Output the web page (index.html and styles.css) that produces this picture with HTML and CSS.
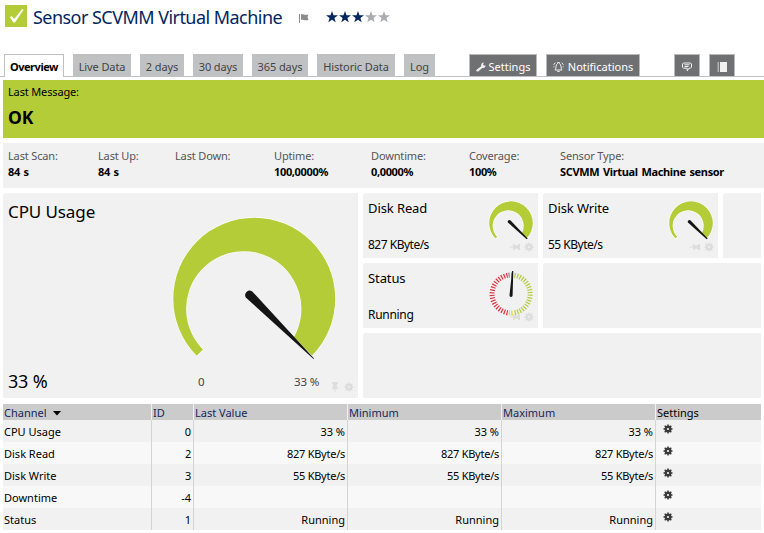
FILE: index.html
```
<!DOCTYPE html>
<html lang="en">
<head>
<meta charset="utf-8">
<title>Sensor SCVMM Virtual Machine</title>
<link rel="stylesheet" href="styles.css">
</head>
<body>
<svg class="defs" aria-hidden="true">
  <symbol id="gear" viewBox="0 0 10 10"><g fill="none" stroke="currentColor"><circle cx="5" cy="5" r="2.300" stroke-width="2.400"/><path stroke-width="1.500" d="M5 .5v2M5 7.500v2M.5 5h2M7.500 5h2M1.700 1.700 3.200 3.200M6.800 6.800 8.300 8.300M1.700 8.300 3.200 6.800M6.800 3.200 8.300 1.700"/></g></symbol>
  <symbol id="pin" viewBox="0 0 10 10"><path d="M0 4.500h3V2h1.500v1.200H8V2h2v6H8V6.800H4.500V8H3V5.500H0z"/></symbol>
  <symbol id="dial" viewBox="0 0 46 46"><path class="arc" d="M7.500 38.500A21.800 21.800 0 1 1 38.500 38.500L33.700 33.400A15.500 15.500 0 1 0 9.200 36.800Z"/><path class="needle" d="M20.200 22.800A1.600 1.600 0 0 1 22.600 20.500L39.700 38.500 38.700 39.300Z"/></symbol>
</svg>
<header class="header">
  <svg class="status" viewBox="0 0 22 22"><path class="lime" d="M0 0h22v22H0z"/><path class="tick" d="M5 12.400 6.600 10.900 9.200 14 17.300 4 18.600 4.800 10 17.600H8.400z"/></svg>
  <h1 class="title">Sensor SCVMM Virtual Machine</h1>
  <svg class="flag" viewBox="0 0 10 9"><path d="M0 0h1v9H0zM2 .3C4-.2 5 1.400 9.500.5L8.500 3l1 3C6 7 4 5.300 2 5.700z"/></svg>
  <svg class="stars" viewBox="0 0 66 12">
    <defs><path id="star" d="M6 0 7.500 4.300H12L8.400 7 9.700 11.300 6 8.700 2.300 11.300 3.600 7 0 4.300H4.500Z"/></defs>
    <g class="navy"><use href="#star"/><use href="#star" x="13"/><use href="#star" x="26"/></g>
    <g class="dim"><use href="#star" x="39"/><use href="#star" x="52"/></g>
  </svg>
</header>
<nav class="tabs">
  <a class="tab active">Overview</a><a class="tab live">Live Data</a><a class="tab d2">2 days</a><a class="tab d30">30 days</a><a class="tab d365">365 days</a><a class="tab historic">Historic Data</a><a class="tab log">Log</a>
  <a class="tab dark settings"><svg class="ico" viewBox="0 0 10 10"><path class="fill" d="M.6 7.700 5.200 4.200C4.800 2 6 .4 8 .5L7 2.300l.7 1.200L9.600 3.400C9.700 5.400 8 6.500 6.300 5.900L2.200 9.500C1 10-.3 8.900.6 7.700z"/></svg><span>Settings</span></a>
  <a class="tab dark notes"><svg class="ico bell" viewBox="0 0 11 10"><path class="line" d="M2 8C3.600 6.500 2.300 2.500 4.500 1.700V.6h2v1.100C8.700 2.500 7.400 6.500 9 8zM4.300 9.400h2.400M2.300.7.6 2.800M8.700.7l1.700 2.100M.4 4.800h1M9.600 4.800h1"/></svg><span>Notifications</span></a>
  <a class="tab dark chat"><svg class="ico" viewBox="0 0 10 10"><path class="line" d="M1.500 1h7l1 1v3.200l-1 1H7L5.200 9V6.200H1.500l-1-1V2zM2.500 2.800h5M2.500 4.500h4"/></svg></a>
  <a class="tab dark book"><svg class="ico" viewBox="0 0 10 10"><path class="fill" d="M3 0h7v10H3zM.5.500h1.500v1H.5zM.5 2.500h1.500v1H.5zM.5 4.500h1.500v1H.5zM.5 6.500h1.500v1H.5zM.5 8.500h1.500v1H.5z"/></svg></a>
</nav>
<section class="message"><span class="small">Last Message:</span><strong class="ok">OK</strong></section>
<dl class="info">
  <div><dt>Last Scan:</dt><dd>84 s</dd></div>
  <div><dt>Last Up:</dt><dd>84 s</dd></div>
  <div><dt>Last Down:</dt></div>
  <div><dt>Uptime:</dt><dd>100,0000%</dd></div>
  <div><dt>Downtime:</dt><dd>0,0000%</dd></div>
  <div><dt>Coverage:</dt><dd>100%</dd></div>
  <div><dt>Sensor Type:</dt><dd>SCVMM Virtual Machine sensor</dd></div>
</dl>
<main class="gauges">
  <section class="card cpu">
    <div class="labels"><h2>CPU Usage</h2><b class="value">33 %</b></div>
    <div class="plot">
      <svg class="big" viewBox="168 213 172 150"><path class="arc" d="M196.700 355.700A81 81 0 1 1 312 355.500L294 337A57.600 57.600 0 1 0 203 349.500Z"/><path class="needle" d="M245.800 297.500A4.600 4.600 0 0 1 252 291.200L314 358.500 313.500 359Z"/></svg>
      <div class="range"><span>0</span><span>33 %</span></div>
    </div>
    <div class="tools"><svg class="up"><use href="#pin"/></svg><svg><use href="#gear"/></svg></div>
  </section>
  <section class="card"><div class="labels"><h3>Disk Read</h3><span>827 KByte/s</span></div><svg class="dial"><use href="#dial"/></svg><div class="tools"><svg><use href="#pin"/></svg><svg><use href="#gear"/></svg></div></section>
  <section class="card"><div class="labels"><h3>Disk Write</h3><span>55 KByte/s</span></div><svg class="dial"><use href="#dial"/></svg><div class="tools"><svg><use href="#pin"/></svg><svg><use href="#gear"/></svg></div></section>
  <section class="card"></section>
  <section class="card"><div class="labels"><h3>Status</h3><span class="run">Running</span></div>
    <svg class="dial low" viewBox="0 0 46 46"><g class="ticks"><path class="red" d="M19.700 41.700A19 19 0 0 1 19.700 4.300"/><path class="grey" d="M20.500 4.200A19 19 0 0 1 25 4.100"/><path class="green" d="M26.500 4.300A19 19 0 0 1 26.500 41.700"/><path class="yellow" d="M24.500 41.900A19 19 0 0 1 21 41.900"/></g><path class="needle" d="M24.100 0h1.200L24.600 24.500A1.500 1.500 0 0 1 21.500 24.300Z"/></svg>
    <div class="tools"><svg><use href="#pin"/></svg><svg><use href="#gear"/></svg></div></section>
  <section class="card wide"></section>
  <section class="card full"></section>
</main>
<table class="channels">
  <colgroup><col class="c1"><col class="c2"><col class="c3"><col class="c3"><col class="c3"><col></colgroup>
  <thead><tr><th>Channel <svg class="sort" viewBox="0 0 8 5"><path d="M0 0h8L4 4.500z"/></svg></th><th>ID</th><th>Last Value</th><th>Minimum</th><th>Maximum</th><th class="plain">Settings</th></tr></thead>
  <tbody>
    <tr><td>CPU Usage</td><td>0</td><td>33 %</td><td>33 %</td><td>33 %</td><td><svg class="gear"><use href="#gear"/></svg></td></tr>
    <tr class="num"><td>Disk Read</td><td>2</td><td>827 KByte/s</td><td>827 KByte/s</td><td>827 KByte/s</td><td><svg class="gear"><use href="#gear"/></svg></td></tr>
    <tr class="num"><td>Disk Write</td><td>3</td><td>55 KByte/s</td><td>55 KByte/s</td><td>55 KByte/s</td><td><svg class="gear"><use href="#gear"/></svg></td></tr>
    <tr><td>Downtime</td><td>-4</td><td></td><td></td><td></td><td><svg class="gear"><use href="#gear"/></svg></td></tr>
    <tr><td>Status</td><td>1</td><td>Running</td><td>Running</td><td>Running</td><td><svg class="gear"><use href="#gear"/></svg></td></tr>
  </tbody>
</table>
</body>
</html>
```
FILE: styles.css
```
* { box-sizing: border-box; }
body { margin: 0; height: 533px; overflow: hidden; background: #fff; color: #000; font: 11px/16px "Noto Sans", "Open Sans", sans-serif; }
h1, h2, h3, dl, dd { margin: 0; font-weight: 400; }
svg { display: block; flex: none; }
.defs { position: absolute; width: 0; height: 0; }
.lime { fill: #b4cc38; }
.tick { fill: #fff; }
.navy { fill: #03265f; }
.dim { fill: #a9abae; }

.header { height: 54px; display: flex; align-items: flex-start; padding: 5px 0 0 5px; }
.status { width: 22px; height: 22px; }
.title { width: 272px; padding-left: 6px; font-size: 18px; line-height: 24px; color: #03265f; white-space: nowrap; letter-spacing: -.54px; }
.flag { width: 10px; height: 9px; margin-top: 9px; fill: #8c8c8c; }
.stars { width: 66px; height: 12px; margin: 6px 0 0 17px; }

.tabs { display: flex; height: 23px; padding-left: 4px; border-bottom: 1px solid #c0c1c3; white-space: nowrap; }
.tab { height: 22px; margin-right: 9px; display: flex; align-items: center; justify-content: center; padding-top: 4px; background: #c0c1c3; color: #444; letter-spacing: -.1px; }
.active { width: 60px; height: 23px; background: #fff; border: 1px solid #c0c1c3; border-bottom: 0; padding-top: 2px; color: #000; font-weight: 700; letter-spacing: -.45px; }
.live { width: 58px; }
.d2 { width: 44px; }
.d30 { width: 50px; }
.d365 { width: 56px; }
.historic { width: 78px; }
.log { width: 31px; margin-right: 34px; }
.dark { background: #6f7072; border: 1px solid #b9babc; border-bottom: 0; padding-top: 3px; color: #fff; gap: 3px; letter-spacing: 0; }
.settings { width: 68px; }
.notes { width: 94px; margin-right: 34px; gap: 4px; }
.chat, .book { width: 26px; }
.ico { width: 10px; height: 10px; }
.bell { width: 11px; }
.fill { fill: #f1f1f1; }
.line { fill: none; stroke: #f1f1f1; stroke-width: 1; }

.message { height: 58px; margin: 3px 0 0 3px; padding: 4px 5px; background: #b4cc38; display: flex; flex-direction: column; }
.small { letter-spacing: -.15px; }
.ok { font-size: 17.500px; line-height: 24px; margin-top: 5px; }

.info { display: grid; grid-template-columns: 90px 77px 99px 97px 98px 91px 1fr; height: 45px; margin: 5px 0 0 3px; padding: 5px 0 0 5px; background: #f1f1f1; white-space: nowrap; }
.info dt { color: #555; letter-spacing: -.15px; }
.info dd { font-weight: 700; letter-spacing: -.35px; word-spacing: 1.200px; }

.gauges { display: grid; grid-template-columns: 355px 175px 175px 38px; grid-template-rows: repeat(3, 65px); gap: 5px; margin: 5px 3px 0; }
.card { position: relative; display: flex; justify-content: space-between; padding: 5px 4px 5px 5px; background: #f1f1f1; border-top-left-radius: 3px; white-space: nowrap; }
.cpu { grid-row: span 3; padding: 0 18px 0 5px; }
.wide { grid-column: span 2; }
.full { grid-column: span 3; }
.labels { display: flex; flex-direction: column; justify-content: space-between; font-size: 12px; letter-spacing: -.5px; }
.labels h3 { font-size: 13px; line-height: 20px; letter-spacing: -.1px; }
.labels h2 { font-size: 17px; line-height: 24px; padding-top: 7px; letter-spacing: -.1px; }
.labels .run { letter-spacing: -.3px; }
.labels .value { font-size: 18px; line-height: 24px; padding-bottom: 5px; font-weight: 400; letter-spacing: -.2px; }
.arc { fill: #b4cc38; stroke: #fff; stroke-width: 1.200; paint-order: stroke; }
.needle { fill: #151515; }
.plot { width: 172px; padding-top: 20px; }
.big { width: 172px; height: 150px; }
.range { display: flex; justify-content: space-between; margin: 11px 21px 0 30px; color: #444; font-size: 11.500px; letter-spacing: -.2px; }
.dial { width: 46px; height: 46px; margin-top: 2px; }
.low { margin-top: 3px; }
.ticks { fill: none; stroke-width: 5; stroke-dasharray: 1.200 1.500; }
.red { stroke: #dc3540; }
.green { stroke: #b4cc38; }
.yellow { stroke: #f9cd0c; }
.grey { stroke: #888; }
.tools { position: absolute; right: 4px; bottom: 6px; display: flex; gap: 4px; color: #ddd; fill: #ddd; }
.tools svg { width: 10px; height: 10px; }
.tools .up { transform: rotate(-90deg); }

.channels { width: 758px; margin: 6px 0 0 3px; table-layout: fixed; border-collapse: separate; border-spacing: 0; white-space: nowrap; }
.c1 { width: 149px; }
.c2 { width: 42px; }
.c3 { width: 154px; }
.channels th { height: 16px; padding: 1px 1px 0; line-height: 15px; background: #cbcbcb; color: #16275e; font-weight: 400; text-align: left; border-right: 1px solid #f1f1f1; }
.channels .plain { color: #000; }
.channels td { height: 22px; padding: 2px 2px 0 1px; line-height: 20px; text-align: right; background: #f1f1f1; border-right: 1px solid #d4d4d4; }
.channels .num td:not(:first-child) { letter-spacing: -.25px; }
.channels tr:nth-child(even) td { background: #f8f8f8; }
.channels td:first-child { text-align: left; }
.channels th:last-child, .channels td:last-child { border-right: 0; }
.sort { display: inline-block; width: 8px; height: 5px; margin: 0 0 1px 4px; }
.gear { width: 10px; height: 10px; margin: -6px 0 0 6px; color: #3b3b3b; }
```
